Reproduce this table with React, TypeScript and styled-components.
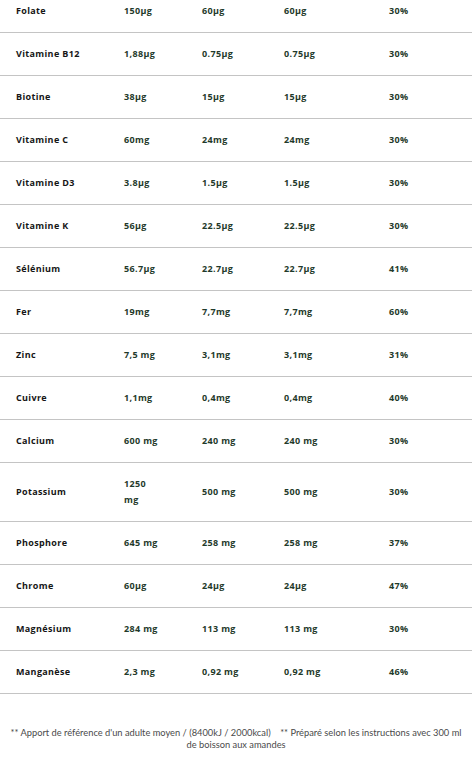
import styled, { createGlobalStyle } from "styled-components";

const GlobalStyle = createGlobalStyle`
  html, body {
    margin: 0;
    padding: 0;
    background: #ffffff;
  }
  body {
    font-family: "Open Sans", "Liberation Sans", sans-serif;
    overflow: hidden;
  }
`;

const Table = styled.div`
  display: flex;
  flex-direction: column;
  margin-top: -10px;
`;

const Row = styled.div`
  display: grid;
  grid-template-columns: 108px 78px 82px 105px 1fr;
  align-items: center;
  border-bottom: 1px solid #c4c4c4;
`;

const Cell = styled.div<{ $name?: boolean }>`
  padding: 13px 25px 13px 16px;
  font-size: 9px;
  line-height: 16px;
  font-weight: 700;
  letter-spacing: 0.35px;
  color: ${(p) => (p.$name ? "#161616" : "#1f3a2b")};
`;

const Footnote = styled.p`
  margin: 0;
  padding: 33px 8px 0;
  text-align: center;
  font-family: "Lato", "Liberation Sans", sans-serif;
  font-size: 9.3px;
  line-height: 12px;
  color: #4a4a4a;
`;

const rows: [string, string, string, string, string][] = [
  ["Folate", "150µg", "60µg", "60µg", "30%"],
  ["Vitamine B12", "1,88µg", "0.75µg", "0.75µg", "30%"],
  ["Biotine", "38µg", "15µg", "15µg", "30%"],
  ["Vitamine C", "60mg", "24mg", "24mg", "30%"],
  ["Vitamine D3", "3.8µg", "1.5µg", "1.5µg", "30%"],
  ["Vitamine K", "56µg", "22.5µg", "22.5µg", "30%"],
  ["Sélénium", "56.7µg", "22.7µg", "22.7µg", "41%"],
  ["Fer", "19mg", "7,7mg", "7,7mg", "60%"],
  ["Zinc", "7,5 mg", "3,1mg", "3,1mg", "31%"],
  ["Cuivre", "1,1mg", "0,4mg", "0,4mg", "40%"],
  ["Calcium", "600 mg", "240 mg", "240 mg", "30%"],
  ["Potassium", "1250 mg", "500 mg", "500 mg", "30%"],
  ["Phosphore", "645 mg", "258 mg", "258 mg", "37%"],
  ["Chrome", "60µg", "24µg", "24µg", "47%"],
  ["Magnésium", "284 mg", "113 mg", "113 mg", "30%"],
  ["Manganèse", "2,3 mg", "0,92 mg", "0,92 mg", "46%"],
];

const footnote =
  "** Apport de référence d'un adulte moyen / (8400kJ / 2000kcal)\u00a0\u00a0\u00a0\u00a0** Préparé selon les instructions avec 300 ml de boisson aux amandes";

export default function App() {
  return (
    <>
      <GlobalStyle />
      <Table>
        {rows.map((r) => (
          <Row key={r[0]}>
            <Cell $name>{r[0]}</Cell>
            <Cell>{r[1]}</Cell>
            <Cell>{r[2]}</Cell>
            <Cell>{r[3]}</Cell>
            <Cell>{r[4]}</Cell>
          </Row>
        ))}
      </Table>
      <Footnote>{footnote}</Footnote>
    </>
  );
}
